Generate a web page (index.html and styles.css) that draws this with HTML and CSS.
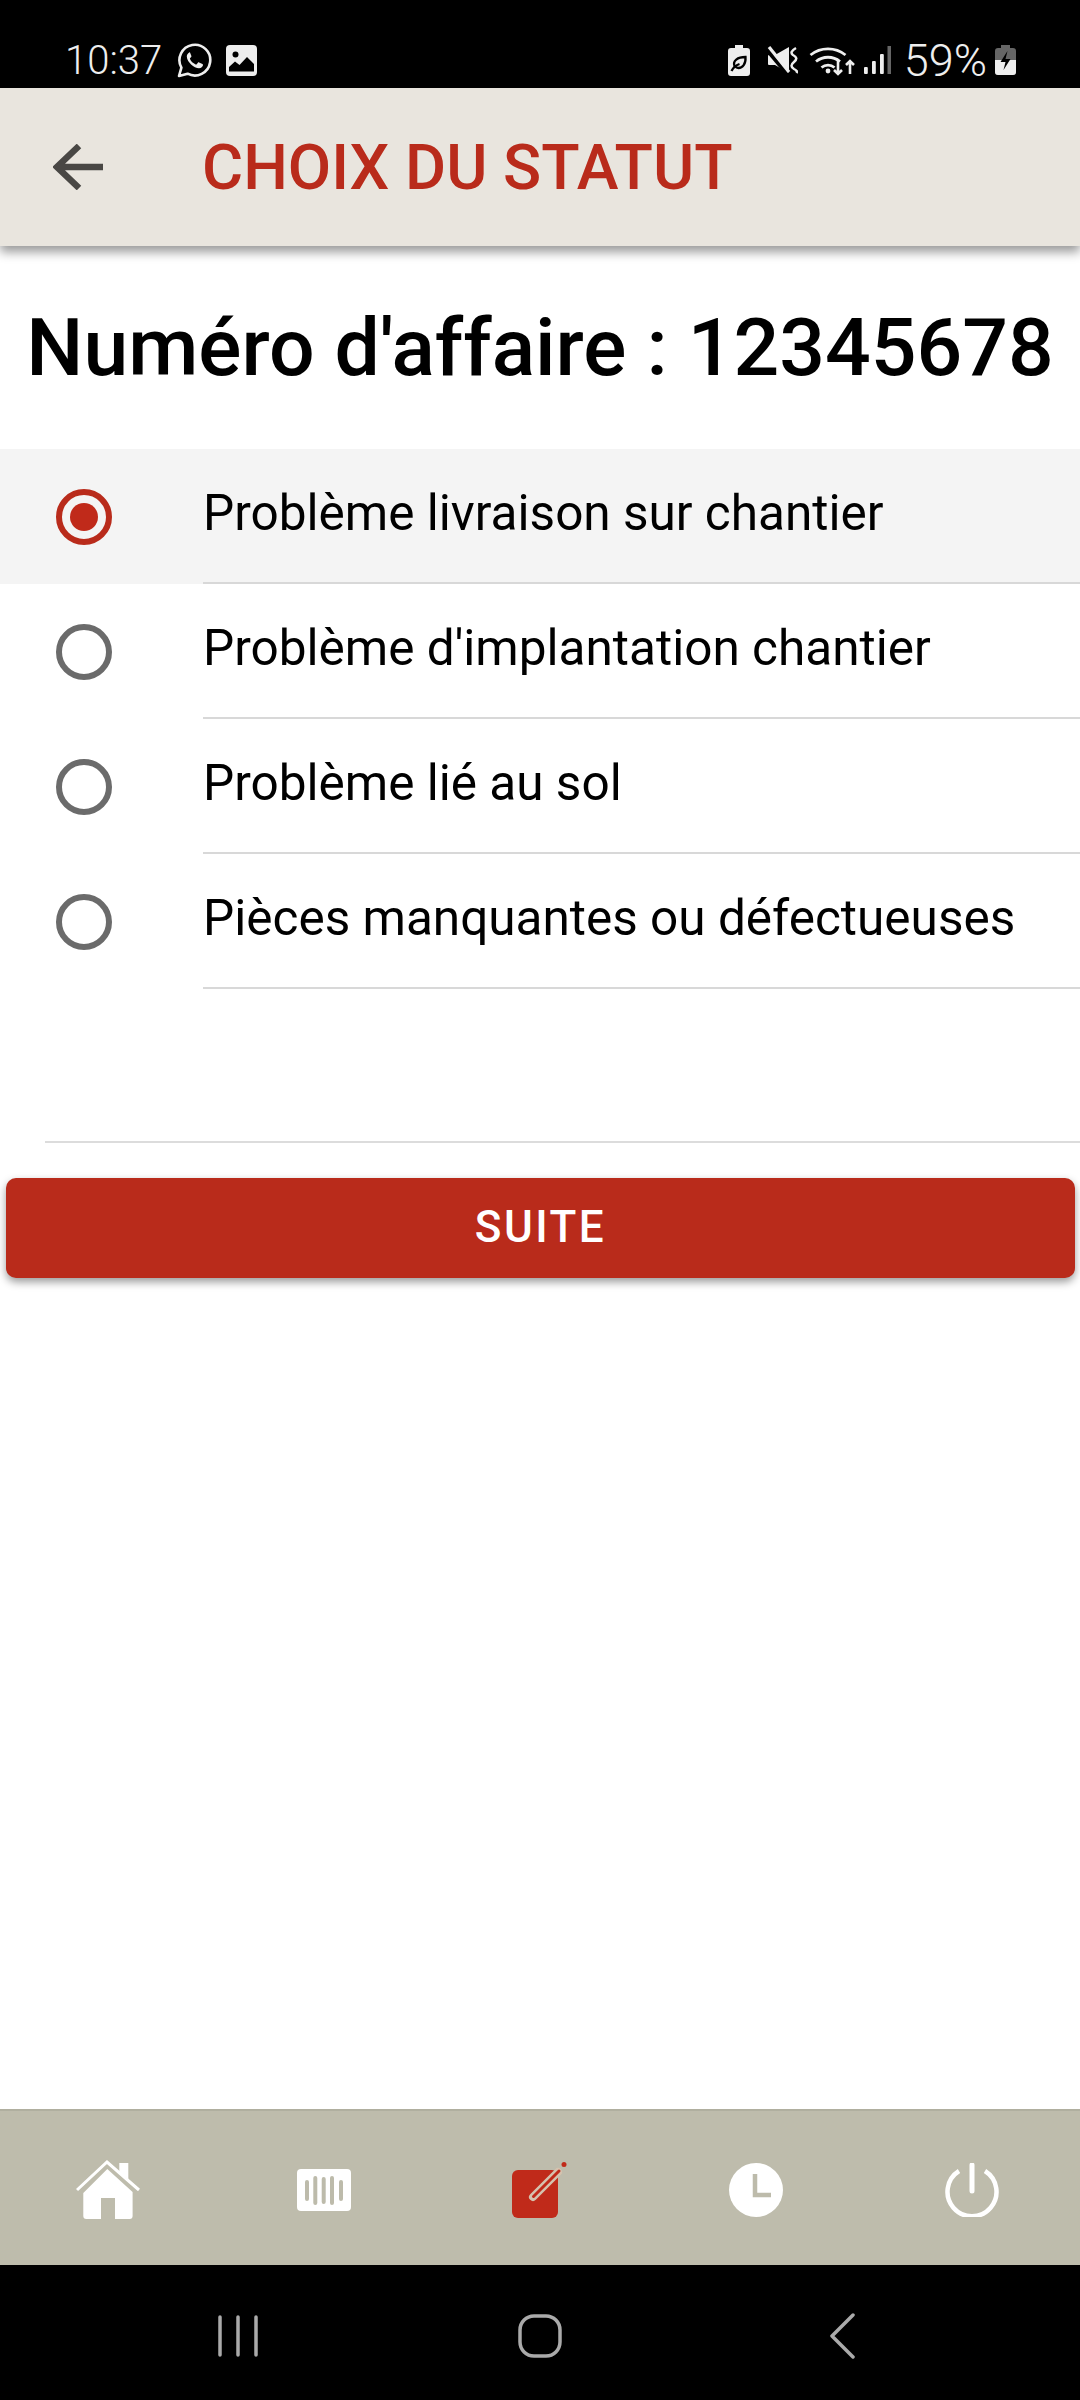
FILE: index.html
```html
<!DOCTYPE html>
<html lang="fr">
<head>
    <meta charset="UTF-8">
    <meta name="viewport" content="width=device-width, initial-scale=1.0">
    <title>Choix du statut</title>
    <link rel="stylesheet" href="styles.css">
</head>
<body>
    <div class="phone">
        <div class="status-bar">
            <div class="status-left">
                <span class="clock">10:37</span>
                <svg class="ic-whatsapp" viewBox="0 0 35 35">
                    <path d="M2 33l2.400-8.400A15.400 15.400 0 1 1 10.600 30.700z" fill="none" stroke="#eee" stroke-width="2.600" stroke-linejoin="round"/>
                    <path d="M12.500 9.500c-1.300.4-2.700 2-2.700 4 0 3 2.300 6 4.300 8 2.300 2.200 5.500 3.800 7.900 3.800 2.200 0 3.700-1.500 4-3 .1-.7-.1-1-.6-1.300l-3.300-1.600c-.5-.2-.9-.1-1.200.3l-1.200 1.500c-.3.300-.6.400-1.100.2-2.600-1-4.600-3-5.600-5.300-.2-.4-.1-.7.2-1l1-1.200c.3-.4.300-.7.100-1.200l-1.300-3.100c-.3-.6-.6-.7-1-.6z" fill="#eee"/>
                </svg>
                <svg class="ic-image" viewBox="0 0 31 31">
                    <rect width="31" height="31" rx="4" fill="#eee"/>
                    <circle cx="9.500" cy="9.500" r="3" fill="#000"/>
                    <path d="M3 26.500v-4.500l6-5.500 4.500 3.500 7.500-8 7 7v7.500z" fill="#000"/>
                </svg>
            </div>
            <div class="status-right">
                <svg class="ic-leaf" viewBox="0 0 22 31">
                    <path d="M7 0h8v3h4a3 3 0 0 1 3 3v22a3 3 0 0 1-3 3H3a3 3 0 0 1-3-3V6a3 3 0 0 1 3-3h4z" fill="#eee"/>
                    <path d="M6.500 21c-2-5 3-9 11-9 .5 7-3 11-7 11-2 0-3-1-4-2z" fill="none" stroke="#000" stroke-width="2.300"/>
                    <path d="M3.500 26c2-4 5-6 8-7" fill="none" stroke="#000" stroke-width="2.300"/>
                </svg>
                <svg class="ic-mute" viewBox="0 0 31 28">
                    <path d="M2 9h6l14-8v26L8 19H2a1 1 0 0 1-1-1V10a1 1 0 0 1 1-1z" fill="#eee"/>
                    <path d="M0 4l21 25" stroke="#000" stroke-width="4"/>
                    <path d="M2 1l20 25" stroke="#eee" stroke-width="3.200"/>
                    <path d="M29 2Q22 6 26 9Q32 12 27 16Q22 20 27 23Q31 25 29.500 27" fill="none" stroke="#eee" stroke-width="2.500"/>
                </svg>
                <svg class="ic-wifi" viewBox="0 0 46 31">
                    <path d="M1.500 10a28 28 0 0 1 35 0M7 16.500a19 19 0 0 1 24 0M12.500 22.500a10 10 0 0 1 13 0" fill="none" stroke="#eee" stroke-width="2.800"/>
                    <circle cx="19" cy="26" r="2.400" fill="#eee"/>
                    <path d="M29 15v14M25 25l4 4 4-4M41 29V16M37 20l4-4 4 4" fill="none" stroke="#eee" stroke-width="2.600"/>
                </svg>
                <svg class="ic-signal" viewBox="0 0 27 28">
                    <rect x="0" y="21" width="3.800" height="7" rx="1" fill="#eee"/>
                    <rect x="8" y="15" width="3.800" height="13" rx="1" fill="#eee"/>
                    <rect x="16" y="8" width="3.800" height="20" rx="1" fill="#eee"/>
                    <rect x="23.500" y="0" width="3.500" height="28" fill="#666"/>
                </svg>
                <span class="battery">59%</span>
                <svg class="ic-charge" viewBox="0 0 21 30">
                    <path d="M6 0h9v3h3a3 3 0 0 1 3 3v21a3 3 0 0 1-3 3H3a3 3 0 0 1-3-3V6a3 3 0 0 1 3-3h3z" fill="#666"/>
                    <path d="M0 15h21v12a3 3 0 0 1-3 3H3a3 3 0 0 1-3-3z" fill="#eee"/>
                    <path d="M12.500 6l-7 11h5l-2 8 7-11h-5z" fill="#000"/>
                </svg>
            </div>
        </div>

        <header class="app-header">
            <svg class="back" viewBox="0 0 50 46">
                <path d="M26 2L4 23l22 21M4 23h46" fill="none" stroke="#494744" stroke-width="6.500"/>
            </svg>
            <h1 class="title">CHOIX DU STATUT</h1>
        </header>

        <main class="content">
            <h2 class="affaire">Numéro d'affaire : 12345678</h2>
            <ul class="choices">
                <li class="choice selected">
                    <span class="radio"></span>
                    <span class="label">Problème livraison sur chantier</span>
                </li>
                <li class="choice">
                    <span class="radio"></span>
                    <span class="label">Problème d'implantation chantier</span>
                </li>
                <li class="choice">
                    <span class="radio"></span>
                    <span class="label">Problème lié au sol</span>
                </li>
                <li class="choice">
                    <span class="radio"></span>
                    <span class="label">Pièces manquantes ou défectueuses</span>
                </li>
            </ul>
            <div class="separator"></div>
            <button class="next">SUITE</button>
        </main>

        <nav class="tabs">
            <div class="tab">
                <svg class="ic-home" viewBox="0 0 64 60">
                    <path d="M1 30L31 2l32 28" fill="none" stroke="#fff" stroke-width="3"/>
                    <path d="M43.300 3h9v17l-9-8z" fill="#fff"/>
                    <path d="M31.300 9l25.300 23v24a3 3 0 0 1-3 3H39V38H25v21H10.300a3 3 0 0 1-3-3V33z" fill="#fff"/>
                </svg>
            </div>
            <div class="tab">
                <svg class="ic-barcode" viewBox="0 0 54 42">
                    <rect width="54" height="42" rx="4" fill="#fff"/>
                    <path d="M10 13v17M18.300 9v25M26.700 10v23M35 9v25M44 13v17" stroke="#bdbbab" stroke-width="4" stroke-linecap="round"/>
                </svg>
            </div>
            <div class="tab">
                <svg class="ic-edit" viewBox="0 0 56 56">
                    <rect x="0" y="8" width="46" height="48" rx="6" fill="#c02a1a"/>
                    <path d="M21 35L46 10" stroke="#d5c2ae" stroke-width="8" stroke-linecap="round"/>
                    <path d="M21.500 34.500L47 9" stroke="#c02a1a" stroke-width="3" stroke-linecap="round"/>
                    <circle cx="52" cy="2.500" r="2.500" fill="#c02a1a"/>
                </svg>
            </div>
            <div class="tab">
                <svg class="ic-clock" viewBox="0 0 54 54">
                    <circle cx="27" cy="27" r="27" fill="#fff"/>
                    <path d="M26 11v21h16" fill="none" stroke="#bdbbab" stroke-width="4.500"/>
                </svg>
            </div>
            <div class="tab">
                <svg class="ic-power" viewBox="0 0 54 54">
                    <path d="M14 8a24.500 24.500 0 1 0 26 0" fill="none" stroke="#fff" stroke-width="4.500"/>
                    <path d="M27 2v26" stroke="#fff" stroke-width="5" stroke-linecap="round"/>
                </svg>
            </div>
        </nav>

        <div class="system-nav">
            <svg class="ic-recent" viewBox="0 0 40 42">
                <path d="M2 2v38M20 2v38M38 2v38" stroke="#aaa" stroke-width="3.500" stroke-linecap="round"/>
            </svg>
            <svg class="ic-homekey" viewBox="0 0 44 44">
                <rect x="2" y="2" width="40" height="40" rx="14" fill="none" stroke="#aaa" stroke-width="3.500"/>
            </svg>
            <svg class="ic-backkey" viewBox="0 0 26 46">
                <path d="M24 2L3 23l21 21" fill="none" stroke="#aaa" stroke-width="3.500" stroke-linecap="round" stroke-linejoin="round"/>
            </svg>
        </div>
    </div>
</body>
</html>
```

FILE: styles.css
```css
* {
    box-sizing: border-box;
}
html, body {
    margin: 0;
    padding: 0;
}
body {
    font-family: 'Roboto', 'Liberation Sans', sans-serif;
    background-color: #fff;
}
.phone {
    width: 1080px;
    height: 2400px;
    display: flex;
    flex-direction: column;
    overflow: hidden;
}

/* barre d'etat */
.status-bar {
    height: 88px;
    background-color: #000;
    color: #eee;
    display: flex;
    justify-content: space-between;
    align-items: center;
    padding: 32px 64px 0 65px;
    flex-shrink: 0;
}
.status-left, .status-right {
    display: flex;
    align-items: center;
}
.clock {
    font-size: 40px;
    font-weight: 300;
    margin-right: 15px;
}
.battery {
    font-size: 45px;
    font-weight: 300;
    margin: 0 8px 0 13px;
}
.ic-whatsapp { width: 35px; height: 35px; margin-right: 14px; }
.ic-image { width: 31px; height: 31px; }
.ic-leaf { width: 22px; height: 31px; margin-right: 17px; }
.ic-mute { width: 31px; height: 28px; margin-right: 11px; }
.ic-wifi { width: 46px; height: 31px; margin-right: 9px; }
.ic-signal { width: 27px; height: 28px; }
.ic-charge { width: 21px; height: 30px; }

/* entete */
.app-header {
    height: 158px;
    background-color: #e9e5de;
    display: flex;
    align-items: center;
    padding-left: 53px;
    box-shadow: 0 6px 10px rgba(0, 0, 0, 0.4);
    position: relative;
    flex-shrink: 0;
}
.back {
    width: 50px;
    height: 46px;
    margin-right: 99px;
}
.title {
    margin: 0;
    font-size: 63px;
    font-weight: 500;
    color: #b92b1b;
}

/* contenu */
.content {
    flex: 1;
    display: flex;
    flex-direction: column;
}
.affaire {
    margin: 0;
    height: 203px;
    line-height: 203px;
    text-align: center;
    font-size: 80.500px;
    font-weight: 500;
    color: #000;
}
.choices {
    list-style: none;
    margin: 0;
    padding: 0;
}
.choice {
    height: 135px;
    display: flex;
    align-items: center;
}
.choice.selected {
    background-color: #f4f4f4;
}
.radio {
    width: 56px;
    height: 56px;
    margin: 0 91px 0 56px;
    border: 6px solid #6b6b6b;
    border-radius: 50%;
    display: flex;
    align-items: center;
    justify-content: center;
    flex-shrink: 0;
}
.selected .radio {
    border-color: #b92b1b;
}
.selected .radio::after {
    content: "";
    width: 28px;
    height: 28px;
    border-radius: 50%;
    background-color: #c02a1a;
}
.label {
    flex: 1;
    height: 100%;
    display: flex;
    align-items: center;
    padding-bottom: 5px;
    font-size: 49.500px;
    color: #000;
    border-bottom: 2px solid #d8d8d8;
}
.separator {
    height: 2px;
    margin: 152px 0 0 45px;
    background-color: #dcdcdc;
}
.next {
    height: 100px;
    margin: 35px 5px 0 6px;
    padding-bottom: 3px;
    border: none;
    border-radius: 10px;
    background-color: #b92b1b;
    color: #fff;
    font-family: inherit;
    font-size: 44px;
    font-weight: 500;
    letter-spacing: 2.500px;
    box-shadow: 0 4px 8px rgba(0, 0, 0, 0.4);
}

/* onglets */
.tabs {
    height: 156px;
    background-color: #bebcac;
    border-top: 2px solid #b0af9f;
    display: grid;
    grid-template-columns: repeat(5, 216px);
    flex-shrink: 0;
}
.tab {
    display: flex;
    align-items: center;
    justify-content: center;
    padding-top: 4px;
}
.ic-home { width: 64px; height: 60px; }
.ic-barcode { width: 54px; height: 42px; }
.ic-edit { width: 56px; height: 56px; }
.ic-clock { width: 54px; height: 54px; }
.ic-power { width: 54px; height: 54px; }

/* navigation systeme */
.system-nav {
    height: 135px;
    padding-top: 6px;
    background-color: #000;
    display: grid;
    grid-template-columns: repeat(3, 302px);
    justify-content: center;
    justify-items: center;
    align-items: center;
    flex-shrink: 0;
}
.ic-recent { width: 40px; height: 42px; }
.ic-homekey { width: 44px; height: 44px; }
.ic-backkey { width: 26px; height: 46px; }
```
